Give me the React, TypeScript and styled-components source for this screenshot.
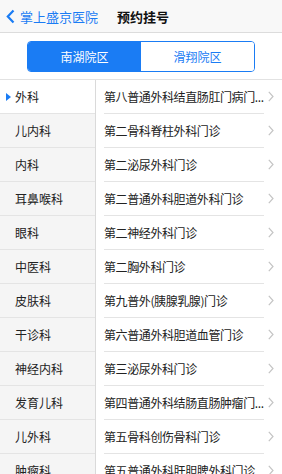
import React from "react";
import styled, { createGlobalStyle } from "styled-components";

const GlobalStyle = createGlobalStyle`
   html, body {
      margin: 0;
      padding: 0;
      background: #ffffff;
      font-family: "Noto Sans CJK SC", "Liberation Sans", sans-serif;
   }
`;

const Page = styled.div`
   width: 282px;
   height: 474px;
   overflow: hidden;
   background: #ffffff;
`;

const NavBar = styled.div`
   height: 32px;
   display: flex;
   align-items: center;
   background: #f8f8f8;
   border-bottom: 1px solid #dcdcdc;
   padding-left: 6px;
`;

const BackLink = styled.div`
   display: flex;
   align-items: center;
   color: #1a7cf4;
   font-size: 13px;

   svg {
      margin-right: 5px;
   }
`;

const Title = styled.div`
   margin-left: 19px;
   font-size: 13px;
   font-weight: bold;
   color: #111;
`;

const SegmentBar = styled.div`
   display: flex;
   justify-content: center;
   padding: 8px 0 7px;
   border-bottom: 1px solid #e2e2e2;
`;

const Segment = styled.div`
   display: flex;
   width: 228px;
   height: 31px;
   border: 1px solid #1a7cf4;
   border-radius: 4px;
   overflow: hidden;
   box-sizing: border-box;
`;

const SegmentItem = styled.div<{ $active?: boolean }>`
   flex: 1;
   display: flex;
   align-items: center;
   justify-content: center;
   font-size: 12px;
   background: ${(p) => (p.$active ? "#1a7cf4" : "#ffffff")};
   color: ${(p) => (p.$active ? "#ffffff" : "#1a7cf4")};
`;

const Body = styled.div`
   display: flex;
`;

const DeptColumn = styled.div`
   width: 95px;
   flex-shrink: 0;
   background: #f5f5f5;
   border-right: 1px solid #dadada;
`;

const DeptRow = styled.div<{ $active?: boolean }>`
   position: relative;
   height: 33px;
   display: flex;
   align-items: center;
   padding-left: 15px;
   font-size: 12px;
   color: #222;
   background: ${(p) => (p.$active ? "#ffffff" : "transparent")};
   border-bottom: 1px solid #e4e4e4;
`;

const Marker = styled.span`
   position: absolute;
   left: 6px;
   top: 13px;
   width: 0;
   height: 0;
   border-top: 4px solid transparent;
   border-bottom: 4px solid transparent;
   border-left: 5px solid #1a7cf4;
`;

const ClinicColumn = styled.div`
   flex: 1;
   min-width: 0;
   padding-left: 8px;
`;

const ClinicRow = styled.div`
   height: 33px;
   display: flex;
   align-items: center;
   border-bottom: 1px solid #e4e4e4;
   margin-right: 18px;
   position: relative;
   font-size: 12px;
   color: #222;
`;

const ClinicName = styled.span`
   white-space: nowrap;
   letter-spacing: -0.4px;
`;

const Chevron = styled.span`
   position: absolute;
   right: -10px;
   top: 11px;
   display: flex;
`;

const depts = [
   "外科",
   "儿内科",
   "内科",
   "耳鼻喉科",
   "眼科",
   "中医科",
   "皮肤科",
   "干诊科",
   "神经内科",
   "发育儿科",
   "儿外科",
   "肿瘤科",
];

const clinics = [
   "第八普通外科结直肠肛门病门...",
   "第二骨科脊柱外科门诊",
   "第二泌尿外科门诊",
   "第二普通外科胆道外科门诊",
   "第二神经外科门诊",
   "第二胸外科门诊",
   "第九普外(胰腺乳腺)门诊",
   "第六普通外科胆道血管门诊",
   "第三泌尿外科门诊",
   "第四普通外科结肠直肠肿瘤门...",
   "第五骨科创伤骨科门诊",
   "第五普通外科肝胆脾外科门诊",
];

const App: React.FC = () => {
   return (
      <Page>
         <GlobalStyle />
         <NavBar>
            <BackLink>
               <svg width="9" height="15" viewBox="0 0 9 15">
                  <path d="M7.5 1.5 L1.8 7.5 L7.5 13.5" fill="none" stroke="#1a7cf4" strokeWidth="2.2" />
               </svg>
               掌上盛京医院
            </BackLink>
            <Title>预约挂号</Title>
         </NavBar>
         <SegmentBar>
            <Segment>
               <SegmentItem $active>南湖院区</SegmentItem>
               <SegmentItem>滑翔院区</SegmentItem>
            </Segment>
         </SegmentBar>
         <Body>
            <DeptColumn>
               {depts.map((d, i) => (
                  <DeptRow key={d} $active={i === 0}>
                     {i === 0 && <Marker />}
                     {d}
                  </DeptRow>
               ))}
            </DeptColumn>
            <ClinicColumn>
               {clinics.map((c) => (
                  <ClinicRow key={c}>
                     <ClinicName>{c}</ClinicName>
                     <Chevron>
                        <svg width="6" height="11" viewBox="0 0 6 11">
                           <path d="M0.8 0.8 L5 5.5 L0.8 10.2" fill="none" stroke="#c4c4c4" strokeWidth="1.2" />
                        </svg>
                     </Chevron>
                  </ClinicRow>
               ))}
            </ClinicColumn>
         </Body>
      </Page>
   );
};

export default App;
